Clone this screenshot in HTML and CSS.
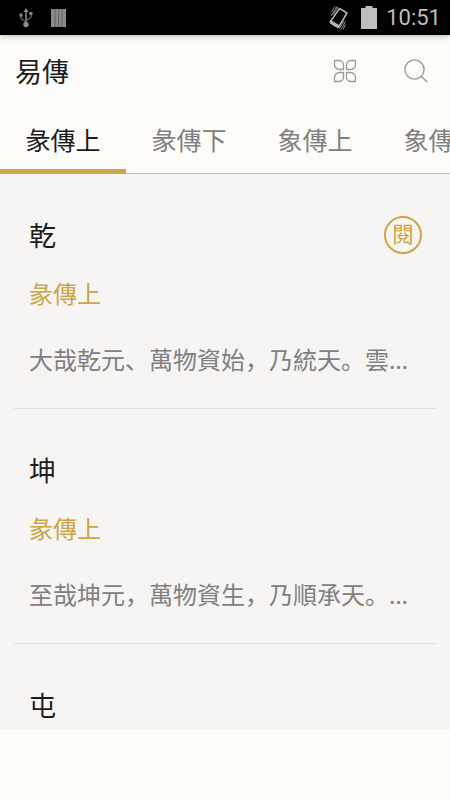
FILE: index.html
```
<!DOCTYPE html>
<html lang="zh">

<head>
    <meta charset="utf-8">
    <meta name="viewport" content="width=device-width,initial-scale=1">
    <title>易傳</title>
    <link rel="stylesheet" href="styles.css">
</head>

<body>
    <div class="status-bar">
        <svg class="usb" width="14" height="20" viewBox="0 0 14 20" fill="none" stroke="#8a8a8a">
            <path d="M7 3v13" stroke-width="1.500" />
            <path d="M2 7v3.500l5 3.500M12 6v3.500l-5 3" />
            <path d="M7 0l2.500 4h-5z" fill="#8a8a8a" stroke="none" />
            <circle cx="7" cy="16.500" r="2.700" fill="#8a8a8a" stroke="none" />
            <path d="M.5 5.500h3v3h-3zM10.500 4h3v3h-3z" fill="#8a8a8a" stroke="none" />
        </svg>
        <svg width="15" height="18" viewBox="0 0 15 18">
            <path d="M0 0h15v18H0z" fill="#8a8a8a" />
            <path d="M4 0v18M7.500 0v18M11 0v18" stroke="#555" stroke-width=".7" />
        </svg>
        <svg class="vibrate" width="22" height="26" viewBox="0 0 22 26" fill="none" stroke="#b4b4b4">
            <path d="M11.500 3.500l7.500 4.500-8 13.500-8.500-5z" stroke-width="1.500" stroke-linejoin="round" />
            <path d="M2.500 15.500l8.500 5-1 2.500-8-5z" fill="#b4b4b4" />
            <path d="M3 11l6-9.500M3.500 7l3.500-5.500M5 10l5-8M13 24.500l4.500-8M11 24l5-8M15 24.500l2.500-5" stroke-width=".8" />
        </svg>
        <svg width="16" height="23" viewBox="0 0 16 23">
            <path d="M4.500 0h7v2H16v21H0V2h4.500z" fill="#bebebe" />
        </svg>
        <span class="clock">10:51</span>
    </div>

    <div class="header">
        <h1>易傳</h1>
        <button class="icon-button" aria-label="分類">
            <svg width="24" height="24" viewBox="0 0 24 24" fill="none" stroke="#999" stroke-width="1.300">
                <path d="M1.500 1.500H6A4.500 4.500 0 0 1 10.500 6v4.500H6.500A5 5 0 0 1 1.500 5.500z" stroke-linejoin="round" />
                <path d="M22.500 1.500H18A4.500 4.500 0 0 0 13.500 6v4.500h4a5 5 0 0 0 5-5z" stroke-linejoin="round" />
                <path d="M1.500 22.500H6a4.500 4.500 0 0 0 4.500-4.500v-4.500h-4a5 5 0 0 0-5 5z" stroke-linejoin="round" />
                <path d="M22.500 22.500H18a4.500 4.500 0 0 1-4.500-4.500v-4.500h4a5 5 0 0 1 5 5z" stroke-linejoin="round" />
            </svg>
        </button>
        <button class="icon-button" aria-label="搜尋">
            <svg width="24" height="24" viewBox="0 0 24 24" fill="none" stroke="#999" stroke-width="1.400">
                <circle cx="10.500" cy="10.500" r="9.600" />
                <path d="M17 17l6 6" />
            </svg>
        </button>
    </div>

    <nav class="tabs">
        <a class="tab active" href="#tuan-1">彖傳上</a>
        <a class="tab" href="#tuan-2">彖傳下</a>
        <a class="tab" href="#xiang-1">象傳上</a>
        <a class="tab" href="#xiang-2">象傳下</a>
    </nav>

    <main class="list">
        <article class="item">
            <div class="item-head">
                <h2>乾</h2>
                <button class="read">閱</button>
            </div>
            <p class="chapter">彖傳上</p>
            <p class="excerpt">大哉乾元、萬物資始，乃統天。雲行雨施，品物流形。</p>
        </article>
        <article class="item">
            <div class="item-head">
                <h2>坤</h2>
            </div>
            <p class="chapter">彖傳上</p>
            <p class="excerpt">至哉坤元，萬物資生，乃順承天。坤厚載物，德合無疆。</p>
        </article>
        <article class="item">
            <div class="item-head">
                <h2>屯</h2>
            </div>
        </article>
    </main>
</body>

</html>
```
FILE: styles.css
```
* {
    margin: 0;
    padding: 0;
    box-sizing: border-box;
}

body {
    display: flex;
    flex-direction: column;
    height: 100vh;
    padding-bottom: 71px;
    overflow: hidden;
    background: #fdfcf8;
    color: #1c1c1c;
    font-family: Roboto, "Noto Sans CJK SC", sans-serif;
    font-size: 24px;
}

h1,
h2 {
    padding-top: 4px;
    font-size: 27px;
    font-weight: 400;
    line-height: 40px;
}

button {
    border: none;
    background: none;
    font-family: inherit;
    cursor: pointer;
}

.status-bar {
    display: flex;
    flex: none;
    align-items: center;
    gap: 9px;
    height: 35px;
    padding: 0 9px 0 19px;
    background: #000;
    box-shadow: 0 1px 6px rgba(0, 0, 0, 0.3);
}

.usb {
    margin-right: 9px;
}

.vibrate {
    margin-left: auto;
    margin-right: 2px;
}

.clock {
    color: #bebebe;
    font-size: 22px;
    line-height: 36px;
}

.header {
    display: flex;
    flex: none;
    align-items: center;
    gap: 47px;
    height: 72px;
    padding: 0 22px 0 15px;
}

.header h1 {
    flex: 1;
}

.icon-button {
    display: flex;
}

.tabs {
    display: flex;
    flex: none;
    height: 67px;
    overflow: hidden;
    background: linear-gradient(#d9bc76, #d9bc76) bottom / 100% 1px no-repeat;
}

.tab {
    flex: 0 0 28%;
    color: #808080;
    font-size: 25px;
    line-height: 70px;
    text-align: center;
    text-decoration: none;
}

.tab.active {
    border-bottom: 5px solid #cca646;
    color: #1c1c1c;
}

.list {
    flex: 1;
    min-height: 0;
    overflow: hidden;
    background: #f7f5f4;
}

.item {
    margin: 0 14px;
    padding: 41px 14px 30px 15px;
    border-bottom: 1px solid #e2e0df;
}

.item-head {
    display: flex;
    align-items: center;
    justify-content: space-between;
    height: 40px;
}

.read {
    width: 38px;
    height: 38px;
    border: 2px solid #cca646;
    border-radius: 50%;
    color: #cca646;
    font-size: 22px;
    line-height: 32px;
}

.chapter {
    margin-top: 22px;
    color: #cca646;
    line-height: 36px;
}

.excerpt {
    margin-top: 29px;
    overflow: hidden;
    color: #808080;
    font-family: "Noto Sans", "Noto Sans CJK SC", sans-serif;
    line-height: 36px;
    text-overflow: ellipsis;
    white-space: nowrap;
}
```
